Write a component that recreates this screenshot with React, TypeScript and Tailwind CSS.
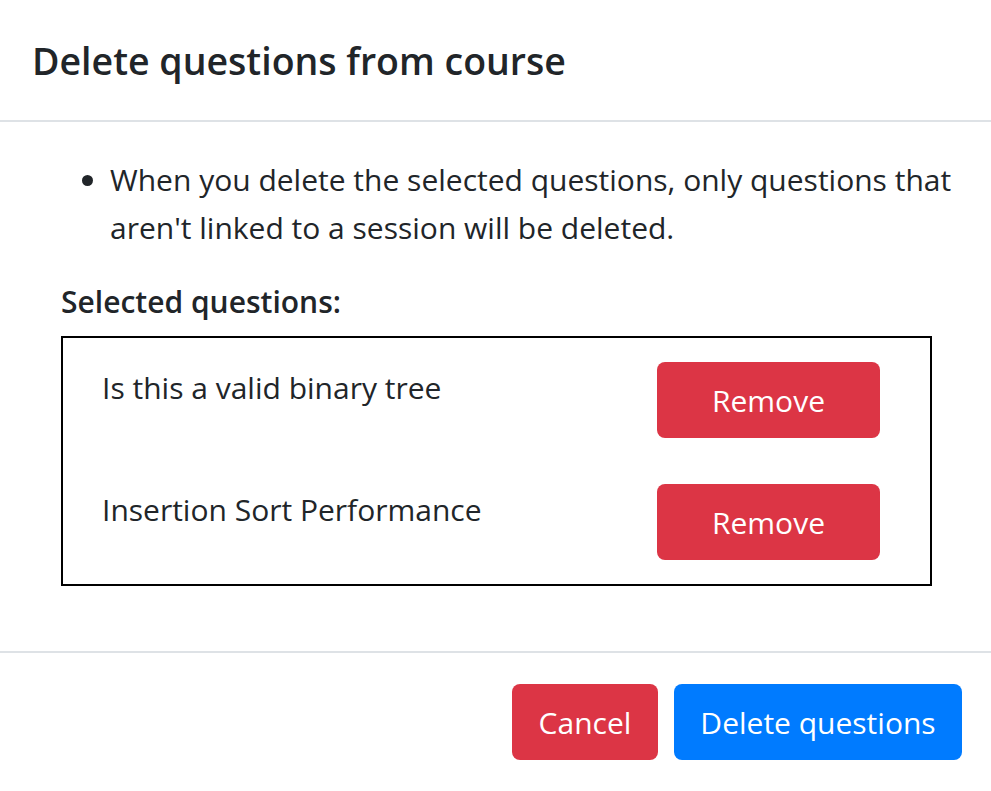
import React from "react";

const font = { fontFamily: '"Open Sans", "Noto Sans", sans-serif' };

export default function App() {
  const items = ["Is this a valid binary tree", "Insertion Sort Performance"];
  return (
    <div className="w-[991px] h-[791px] bg-white text-[#212529] overflow-hidden flex flex-col" style={font}>
      <div className="h-[122px] shrink-0 border-b-2 border-[#dee2e6] flex items-center px-[32px] pt-[2px]">
        <h5 className="text-[37.5px] font-semibold leading-[48px]">Delete questions from course</h5>
      </div>
      <div className="flex-1 flex flex-col pl-[61px] pr-[59px]">
        <ul className="list-disc pl-[49px] mt-[34px] mr-[-40px] text-[30px] leading-[48px]">
          <li>When you delete the selected questions, only questions that aren't linked to a session will be deleted.</li>
        </ul>
        <div className="mt-[26px] text-[30px] leading-[48px] font-semibold">Selected questions:</div>
        <div className="mt-[10px] border-2 border-black h-[250px] pt-[24px] pl-[39px] pr-[50px] flex flex-col gap-[46px]">
          {items.map((t) => (
            <div key={t} className="flex justify-between items-start">
              <div className="text-[30px] leading-[48px] mt-[2px]">{t}</div>
              <button className="w-[223px] h-[76px] rounded-[8px] bg-[#dc3545] text-white text-[30px]">Remove</button>
            </div>
          ))}
        </div>
      </div>
      <div className="h-[140px] shrink-0 border-t-2 border-[#dee2e6] flex items-start justify-end gap-[16px] pt-[31px] pr-[29px]">
        <button className="w-[146px] h-[76px] rounded-[8px] bg-[#dc3545] text-white text-[30px]">Cancel</button>
        <button className="w-[288px] h-[76px] rounded-[8px] bg-[#007bff] text-white text-[30px]">Delete questions</button>
      </div>
    </div>
  );
}
